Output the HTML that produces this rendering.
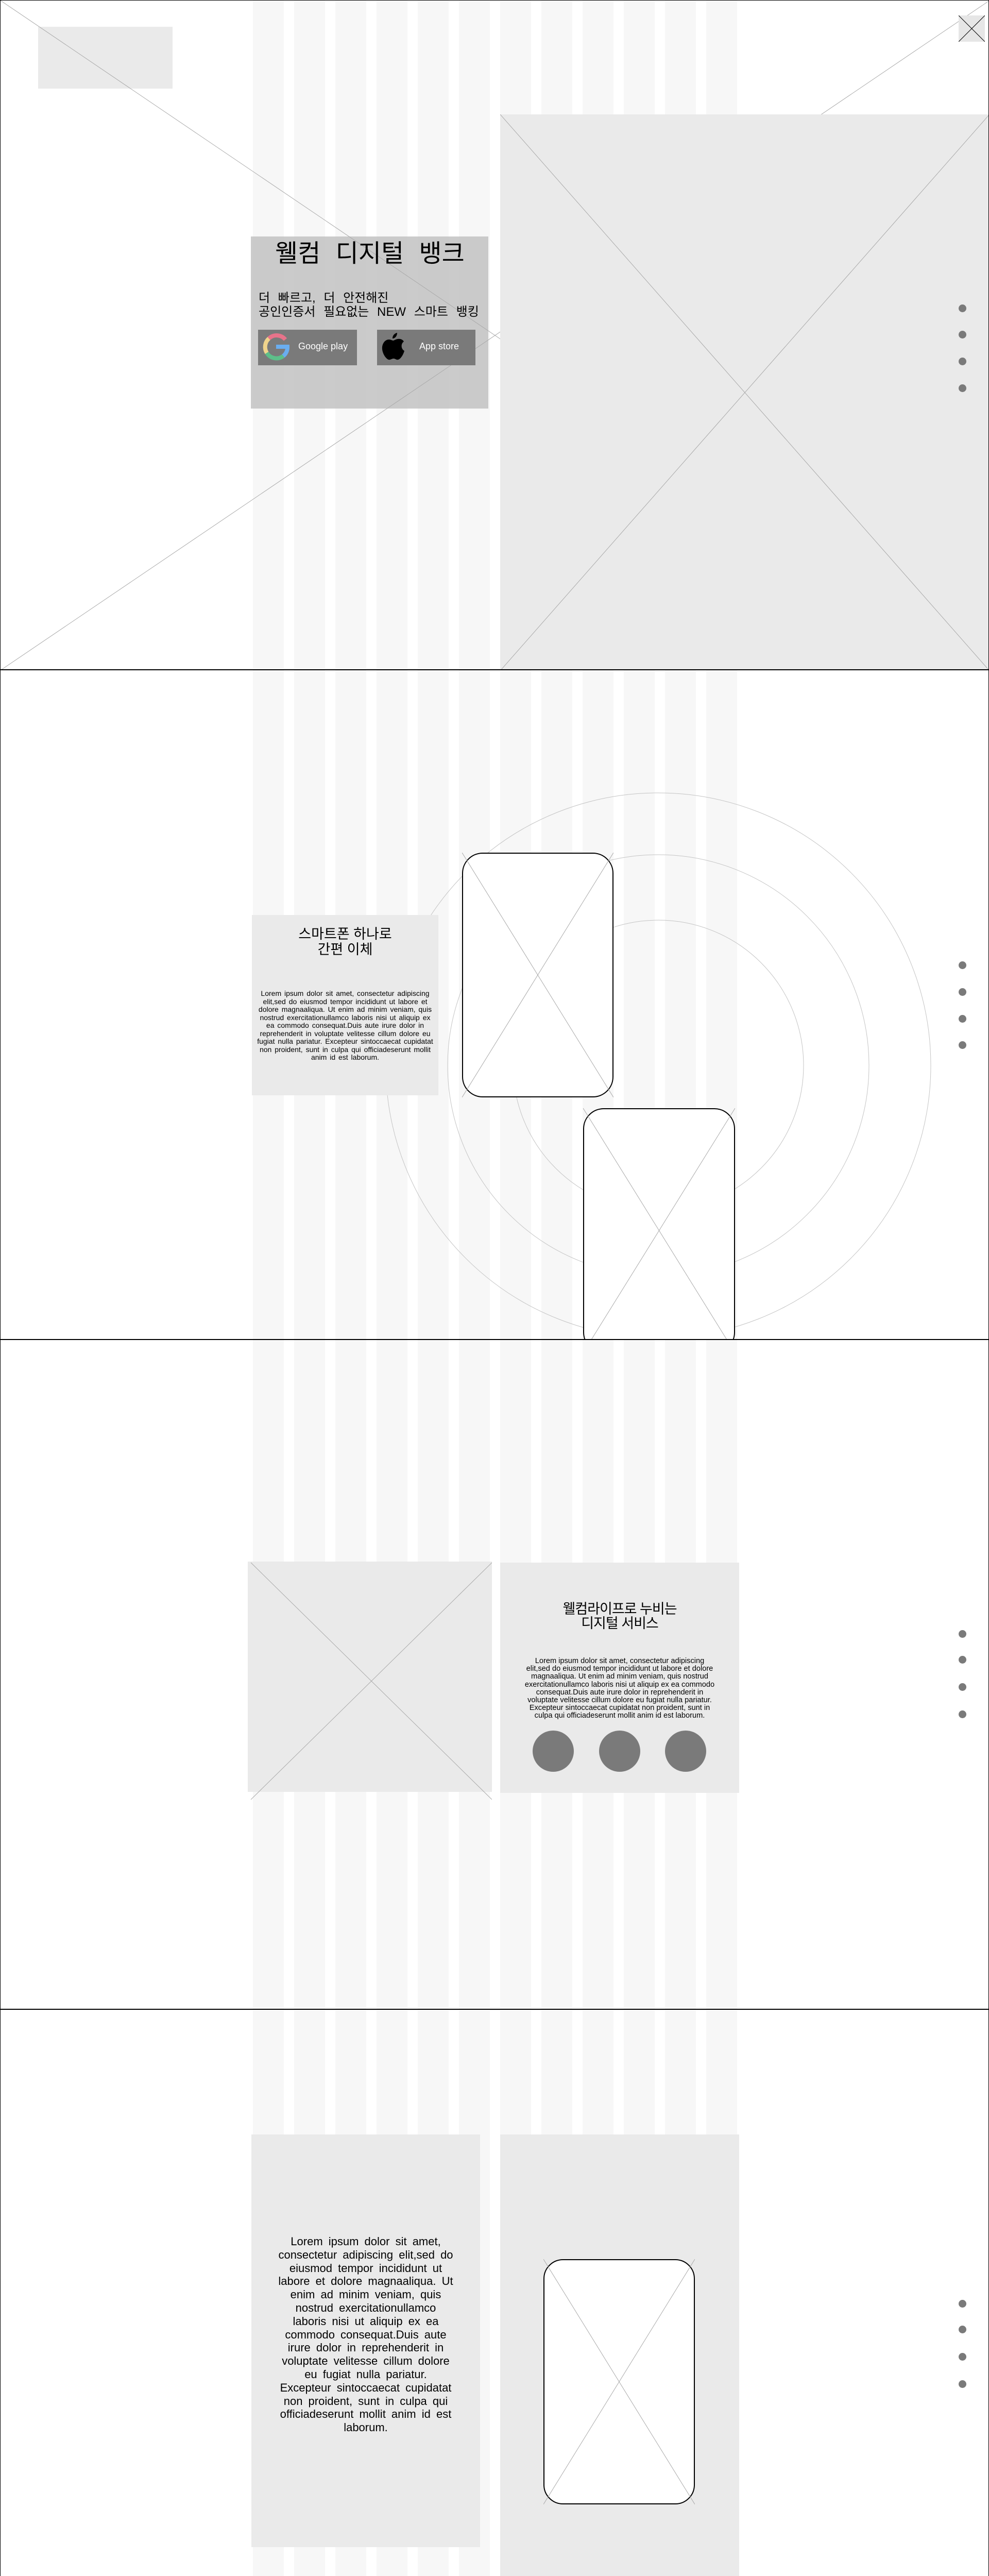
<!DOCTYPE html>
<html lang="ko">
<head>
<meta charset="utf-8">
<style>
*{margin:0;padding:0;box-sizing:border-box}
html,body{width:1920px;height:5200px;max-height:5200px;background:#fff;overflow:hidden}
body{font-family:"Liberation Sans","Noto Sans CJK KR",sans-serif;color:#000;position:relative}
.sec{position:absolute;left:0;width:1920px;height:1300px;border:1px solid #000;overflow:hidden;background:#fff}
.abs{position:absolute}
.stripe{position:absolute;top:0;width:60px;height:1300px;background:#f7f7f7}
.dot{position:absolute;width:15px;height:15px;border-radius:50%;background:#7a7a7a;left:1860px}
.ko{font-family:"Liberation Sans","Noto Sans CJK KR",sans-serif}
svg{position:absolute;overflow:hidden}
.phone{position:absolute;border:2.5px solid #000;border-radius:40px;background:#fff;overflow:hidden}
.txt{text-align:center;white-space:nowrap}
</style>
</head>
<body>

<!-- SECTION 1 -->
<div class="sec" style="top:0">
  <div class="stripe" style="left:490px"></div><div class="stripe" style="left:570px"></div><div class="stripe" style="left:650px"></div><div class="stripe" style="left:730px"></div><div class="stripe" style="left:810px"></div><div class="stripe" style="left:890px"></div><div class="stripe" style="left:970px"></div><div class="stripe" style="left:1050px"></div><div class="stripe" style="left:1130px"></div><div class="stripe" style="left:1210px"></div><div class="stripe" style="left:1290px"></div><div class="stripe" style="left:1370px"></div>
  <div class="abs" style="left:73px;top:51px;width:261px;height:120px;background:#eaeaea"></div>
  <div class="abs" style="left:486px;top:458px;width:461px;height:334px;background:rgba(190,190,190,0.8)"></div>
  <svg width="1920" height="1300" style="left:0;top:0"><line x1="0" y1="0" x2="1920" y2="1300" stroke="#aaa" stroke-width="1"/><line x1="0" y1="1300" x2="1920" y2="0" stroke="#aaa" stroke-width="1"/></svg>
  <div class="abs" style="left:970px;top:221px;width:950px;height:1080px;background:#eaeaea"></div>
  <svg width="950" height="1080" style="left:970px;top:221px"><line x1="0" y1="0" x2="950" y2="1080" stroke="#aaa"/><line x1="0" y1="1080" x2="950" y2="0" stroke="#aaa"/></svg>
  <div class="abs ko" style="left:533px;top:462px;font-size:48px;line-height:60px;word-spacing:16px;white-space:nowrap">웰컴 디지털 뱅크</div>
  <div class="abs ko" style="left:501px;top:564px;font-size:24px;line-height:27px;white-space:nowrap;word-spacing:9px">더 빠르고, 더 안전해진<br>공인인증서 필요없는 NEW 스마트 뱅킹</div>
  <div class="abs" style="left:500px;top:639px;width:192px;height:69px;background:#7a7a7a"></div>
  <svg width="60" height="60" style="left:505px;top:642px" viewBox="0 0 60 60">
    <path d="M48 16 A22 22 0 0 0 16 14" fill="none" stroke="#e8738a" stroke-width="8"/>
    <path d="M16 14 A22 22 0 0 0 12 42" fill="none" stroke="#f0d48c" stroke-width="8"/>
    <path d="M12 42 A22 22 0 0 0 44 48" fill="none" stroke="#5dbf8a" stroke-width="8"/>
    <path d="M44 48 A22 22 0 0 0 52 30 L30 30" fill="none" stroke="#6aaef0" stroke-width="8"/>
  </svg>
  <div class="abs" style="left:578px;top:661px;color:#fff;font-size:18px;white-space:nowrap">Google play</div>
  <div class="abs" style="left:731px;top:639px;width:191px;height:69px;background:#7a7a7a"></div>
  <svg width="46" height="56" style="left:740px;top:643px" viewBox="0 0 46 56">
    <path d="M30 2 C30 8 26 13 21 13 C21 7 25 3 30 2 Z" fill="#000"/>
    <path d="M23 17 C27 15 31 13 36 14 C40 15 42 17 43 19 C37 23 37 33 44 37 C42 44 37 53 32 54 C28 55 27 52 23 52 C19 52 17 55 13 54 C8 52 2 43 1 34 C0 24 6 15 14 15 C18 15 20 17 23 17 Z" fill="#000"/>
  </svg>
  <div class="abs" style="left:813px;top:661px;color:#fff;font-size:18px;white-space:nowrap">App store</div>
  <div class="abs" style="left:1860px;top:29px;width:51px;height:51px;background:#e6e6e6"></div>
  <svg width="51" height="51" style="left:1860px;top:29px"><line x1="0" y1="0" x2="51" y2="51" stroke="#000"/><line x1="0" y1="51" x2="51" y2="0" stroke="#000"/></svg>
  <div class="dot" style="top:590px"></div><div class="dot" style="top:641px"></div><div class="dot" style="top:693px"></div><div class="dot" style="top:745px"></div>
</div>

<!-- SECTION 2 -->
<div class="sec" style="top:1300px">
  <div class="stripe" style="left:490px"></div><div class="stripe" style="left:570px"></div><div class="stripe" style="left:650px"></div><div class="stripe" style="left:730px"></div><div class="stripe" style="left:810px"></div><div class="stripe" style="left:890px"></div><div class="stripe" style="left:970px"></div><div class="stripe" style="left:1050px"></div><div class="stripe" style="left:1130px"></div><div class="stripe" style="left:1210px"></div><div class="stripe" style="left:1290px"></div><div class="stripe" style="left:1370px"></div>
  <svg width="1920" height="1300" style="left:0;top:0">
    <circle cx="1277" cy="767" r="529" fill="none" stroke="#c4c4c4"/>
    <circle cx="1277" cy="767" r="409" fill="none" stroke="#c4c4c4"/>
    <circle cx="1277" cy="767" r="282" fill="none" stroke="#c4c4c4"/>
  </svg>
  <div class="abs" style="left:488px;top:475px;width:362px;height:350px;background:#eaeaea"></div>
  <div class="abs ko" style="left:488px;top:497px;width:362px;text-align:center;font-size:27px;line-height:30px">스마트폰 하나로<br>간편 이체</div>
  <div class="abs txt" style="left:488px;top:620px;width:362px;font-size:14px;line-height:15.5px;word-spacing:2px">Lorem ipsum dolor sit amet, consectetur adipiscing<br>elit,sed do eiusmod tempor incididunt ut labore et<br>dolore magnaaliqua. Ut enim ad minim veniam, quis<br>nostrud exercitationullamco laboris nisi ut aliquip ex<br>ea commodo consequat.Duis aute irure dolor in<br>reprehenderit in voluptate velitesse cillum dolore eu<br>fugiat nulla pariatur. Excepteur sintoccaecat cupidatat<br>non proident, sunt in culpa qui officiadeserunt mollit<br>anim id est laborum.</div>
  <div class="phone" style="left:896px;top:354px;width:294px;height:475px"></div>
  <svg width="294" height="475" style="left:896px;top:354px"><line x1="0" y1="0" x2="294" y2="475" stroke="#aaa"/><line x1="0" y1="475" x2="294" y2="0" stroke="#aaa"/></svg>
  <div class="phone" style="left:1131px;top:850px;width:295px;height:475px"></div>
  <svg width="295" height="450" style="left:1131px;top:850px"><line x1="0" y1="0" x2="295" y2="475" stroke="#aaa"/><line x1="0" y1="475" x2="295" y2="0" stroke="#aaa"/></svg>
  <div class="dot" style="top:565px"></div><div class="dot" style="top:617px"></div><div class="dot" style="top:669px"></div><div class="dot" style="top:720px"></div>
</div>

<!-- SECTION 3 -->
<div class="sec" style="top:2600px">
  <div class="stripe" style="left:490px"></div><div class="stripe" style="left:570px"></div><div class="stripe" style="left:650px"></div><div class="stripe" style="left:730px"></div><div class="stripe" style="left:810px"></div><div class="stripe" style="left:890px"></div><div class="stripe" style="left:970px"></div><div class="stripe" style="left:1050px"></div><div class="stripe" style="left:1130px"></div><div class="stripe" style="left:1210px"></div><div class="stripe" style="left:1290px"></div><div class="stripe" style="left:1370px"></div>
  <div class="abs" style="left:480px;top:430px;width:474px;height:447px;background:#eaeaea"></div>
  <svg width="474" height="462" style="left:480px;top:430px"><line x1="6" y1="2" x2="474" y2="462" stroke="#aaa"/><line x1="6" y1="462" x2="474" y2="2" stroke="#aaa"/></svg>
  <div class="abs" style="left:970px;top:432px;width:464px;height:447px;background:#eaeaea"></div>
  <div class="abs ko" style="left:970px;top:508px;width:464px;text-align:center;font-size:27px;line-height:28px;letter-spacing:-1px">웰컴라이프로 누비는<br>디지털 서비스</div>
  <div class="abs txt" style="left:970px;top:616px;width:464px;font-size:14.6px;line-height:15.2px">Lorem ipsum dolor sit amet, consectetur adipiscing<br>elit,sed do eiusmod tempor incididunt ut labore et dolore<br>magnaaliqua. Ut enim ad minim veniam, quis nostrud<br>exercitationullamco laboris nisi ut aliquip ex ea commodo<br>consequat.Duis aute irure dolor in reprehenderit in<br>voluptate velitesse cillum dolore eu fugiat nulla pariatur.<br>Excepteur sintoccaecat cupidatat non proident, sunt in<br>culpa qui officiadeserunt mollit anim id est laborum.</div>
  <div class="abs" style="left:1033px;top:758px;width:80px;height:80px;border-radius:50%;background:#7a7a7a"></div>
  <div class="abs" style="left:1162px;top:758px;width:80px;height:80px;border-radius:50%;background:#7a7a7a"></div>
  <div class="abs" style="left:1290px;top:758px;width:80px;height:80px;border-radius:50%;background:#7a7a7a"></div>
  <div class="dot" style="top:563px"></div><div class="dot" style="top:613px"></div><div class="dot" style="top:666px"></div><div class="dot" style="top:719px"></div>
</div>

<!-- SECTION 4 -->
<div class="sec" style="top:3900px">
  <div class="stripe" style="left:490px"></div><div class="stripe" style="left:570px"></div><div class="stripe" style="left:650px"></div><div class="stripe" style="left:730px"></div><div class="stripe" style="left:810px"></div><div class="stripe" style="left:890px"></div><div class="stripe" style="left:970px"></div><div class="stripe" style="left:1050px"></div><div class="stripe" style="left:1130px"></div><div class="stripe" style="left:1210px"></div><div class="stripe" style="left:1290px"></div><div class="stripe" style="left:1370px"></div>
  <div class="abs" style="left:487px;top:242px;width:444px;height:801px;background:#eaeaea"></div>
  <div class="abs txt" style="left:487px;top:437px;width:444px;font-size:22px;line-height:25.8px;word-spacing:5px">Lorem ipsum dolor sit amet,<br>consectetur adipiscing elit,sed do<br>eiusmod tempor incididunt ut<br>labore et dolore magnaaliqua. Ut<br>enim ad minim veniam, quis<br>nostrud exercitationullamco<br>laboris nisi ut aliquip ex ea<br>commodo consequat.Duis aute<br>irure dolor in reprehenderit in<br>voluptate velitesse cillum dolore<br>eu fugiat nulla pariatur.<br>Excepteur sintoccaecat cupidatat<br>non proident, sunt in culpa qui<br>officiadeserunt mollit anim id est<br>laborum.</div>
  <div class="abs" style="left:970px;top:242px;width:464px;height:1058px;background:#eaeaea"></div>
  <div class="phone" style="left:1054px;top:484px;width:294px;height:476px;border-radius:38px"></div>
  <svg width="294" height="476" style="left:1054px;top:484px"><line x1="0" y1="0" x2="294" y2="476" stroke="#aaa"/><line x1="0" y1="476" x2="294" y2="0" stroke="#aaa"/></svg>
  <div class="dot" style="top:563px"></div><div class="dot" style="top:613px"></div><div class="dot" style="top:666px"></div><div class="dot" style="top:719px"></div>
</div>

</body>
</html>
